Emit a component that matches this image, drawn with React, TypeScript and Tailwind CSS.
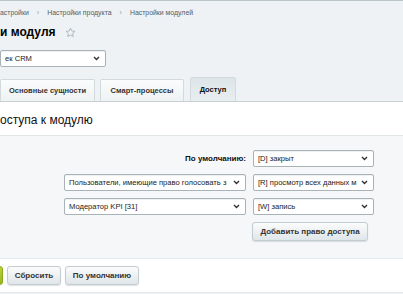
import React from "react";

function Chevron() {
  return (
    <svg width="7" height="5" viewBox="0 0 7 5" className="shrink-0">
      <path d="M1 1 L3.5 3.5 L6 1" fill="none" stroke="#333" strokeWidth="1.4" />
    </svg>
  );
}

function FakeSelect({ text, w }: { text: string; w: string }) {
  return (
    <div
      className={`${w} h-[17px] shrink-0 flex items-center justify-between pl-[4px] pr-[5px] bg-white border border-[#a8b3b9] rounded-[2px] shadow-[inset_0_1px_1px_rgba(0,0,0,0.06)]`}
    >
      <span className="text-[7.6px] leading-none text-[#222] whitespace-nowrap">{text}</span>
      <Chevron />
    </div>
  );
}

function Sep() {
  return <span className="mx-[8px] text-[7px] text-[#8f9aa2]">›</span>;
}

function Star() {
  return (
    <svg width="11" height="11" viewBox="0 0 24 24" className="ml-[9px] mt-[1px]">
      <path
        d="M12 2.5l2.9 6.2 6.8.8-5 4.7 1.3 6.7L12 17.6 6 20.9l1.3-6.7-5-4.7 6.8-.8z"
        fill="none"
        stroke="#a9b3b9"
        strokeWidth="2"
        strokeLinejoin="round"
      />
    </svg>
  );
}

const btn =
  "h-[19px] flex items-center justify-center bg-gradient-to-b from-[#fbfcfc] to-[#dfe6e9] border border-[#c3ccd1] rounded-[3px] shadow-[0_1px_1px_rgba(0,0,0,0.12)] text-[8px] font-bold text-[#333] whitespace-nowrap";

export default function App() {
  return (
    <div
      className="w-[403px] h-[294px] overflow-hidden bg-[#eef2f4] border-t border-[#bcc5ca] text-[#000]"
      style={{ fontFamily: '"Liberation Sans", Arial, sans-serif' }}
    >
      {/* breadcrumb */}
      <div className="flex items-center h-[14px] mt-[5px] text-[6.9px] text-[#535c69] whitespace-nowrap">
        <span>астройки</span>
        <Sep />
        <span>Настройки продукта</span>
        <Sep />
        <span>Настройки модулей</span>
      </div>

      {/* title */}
      <div className="flex items-center h-[20px] mt-[2px]">
        <span className="text-[12px] font-bold leading-none">и модуля</span>
        <Star />
      </div>

      {/* module select */}
      <div className="mt-[8px]">
        <FakeSelect text="ек CRM" w="w-[106px]" />
      </div>

      {/* tabs */}
      <div className="flex items-end mt-[10px] h-[24px] gap-[5px]">
        <div className="w-[95px] h-[22px] flex items-center justify-center bg-gradient-to-b from-[#fbfcfc] to-[#eef2f3] border border-b-0 border-[#d3dadd] rounded-t-[2px] text-[7.5px] font-bold text-[#333]">
          Основные сущности
        </div>
        <div className="w-[84px] h-[22px] flex items-center justify-center bg-gradient-to-b from-[#fbfcfc] to-[#eef2f3] border border-b-0 border-[#d3dadd] rounded-t-[2px] text-[7.5px] font-bold text-[#333]">
          Смарт-процессы
        </div>
        <div className="ml-[1px] w-[46px] h-[24px] flex items-center justify-center bg-gradient-to-b from-[#dde5e8] to-[#e9eef0] border border-b-0 border-[#d3dadd] rounded-t-[2px] text-[7.5px] font-bold text-[#111]">
          Доступ
        </div>
      </div>

      {/* content panel */}
      <div className="bg-white border-t border-[#c7d0d4]">
        <div className="h-[34px] flex items-center border-b border-[#e0e6e8]">
          <span className="text-[12px] text-[#111] leading-none mt-[2px]">оступа к модулю</span>
        </div>

        <div className="bg-[#f5f7f8] pt-[14px] pb-[17px] pl-[64px] flex flex-col gap-[7px]">
          <div className="flex items-center gap-[7px]">
            <div className="w-[182px] flex justify-end text-[8px] font-bold text-[#111]">По умолчанию:</div>
            <FakeSelect text="[D] закрыт" w="w-[121px]" />
          </div>
          <div className="flex items-center gap-[7px]">
            <FakeSelect text="Пользователи, имеющие право голосовать з" w="w-[182px]" />
            <FakeSelect text="[R] просмотр всех данных м" w="w-[121px]" />
          </div>
          <div className="flex items-center gap-[7px]">
            <FakeSelect text="Модератор KPI [31]" w="w-[182px]" />
            <FakeSelect text="[W] запись" w="w-[121px]" />
          </div>
          <div className="flex pl-[188px]">
            <div className={`w-[116px] ${btn}`}>Добавить право доступа</div>
          </div>
        </div>

        <div className="border-t border-[#e3e8ea] bg-white h-[35px] flex items-center gap-[4px] border-b border-[#cfd6da]">
          <div className="w-[60px] -ml-[57px] h-[19px] rounded-[3px] bg-gradient-to-b from-[#b7d63a] to-[#95b61f] border border-[#8aa81c]" />
          <div className={`w-[54px] ${btn}`}>Сбросить</div>
          <div className={`w-[74px] ${btn}`}>По умолчанию</div>
        </div>
      </div>
    </div>
  );
}
